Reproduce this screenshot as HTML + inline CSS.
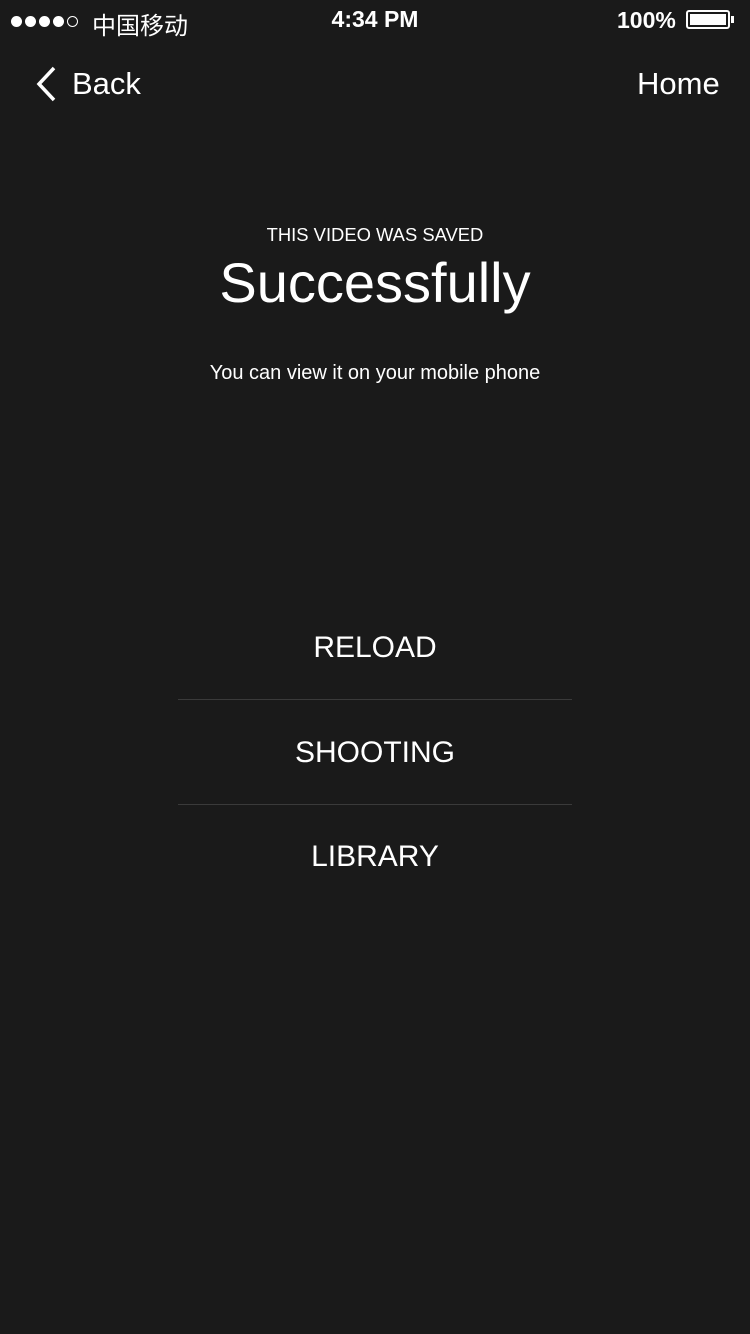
<!DOCTYPE html>
<html><head><meta charset="utf-8"><style>
body{margin:0;width:750px;height:1334px;background:#1a1a1a;color:#fff;font-family:"Liberation Sans","Noto Sans CJK SC",sans-serif;position:relative;overflow:hidden}
.a{position:absolute;white-space:nowrap}
.dot{display:inline-block;width:11px;height:11px;border-radius:50%;background:#fff;margin-right:3px;box-sizing:border-box}
.c{left:0;width:750px;text-align:center}
.line{position:absolute;left:178px;width:394px;height:1px;background:#3a3a3a}
</style></head><body>
<div class="a" style="left:11px;top:14px"><span class="dot"></span><span class="dot"></span><span class="dot"></span><span class="dot"></span><span class="dot" style="background:none;border:1.5px solid #fff"></span></div>
<div class="a" style="left:92px;top:6px;font-size:24px">中国移动</div>
<div class="a c" style="top:6px;font-size:23px;font-weight:bold">4:34 PM</div>
<div class="a" style="left:617px;top:7px;font-size:23px;font-weight:bold">100%</div>
<div class="a" style="left:686px;top:10px;width:44px;height:19px;border:2px solid #fff;border-radius:3px;box-sizing:border-box;padding:2px"><div style="background:#fff;width:100%;height:100%"></div></div>
<div class="a" style="left:731px;top:16px;width:3px;height:7px;background:#fff"></div>
<svg class="a" style="left:34px;top:66px" width="24" height="36"><path d="M20 2 L5 18 L20 34" stroke="#fff" stroke-width="3.5" fill="none"/></svg>
<div class="a" style="left:72px;top:66px;font-size:31px">Back</div>
<div class="a" style="left:637px;top:66px;font-size:31px">Home</div>
<div class="a c" style="top:224px;font-size:18.4px">THIS VIDEO WAS SAVED</div>
<div class="a c" style="top:250px;font-size:56px">Successfully</div>
<div class="a c" style="top:362px;font-size:20px">You can view it on your mobile phone</div>
<div class="a c" style="top:631px;font-size:30px">RELOAD</div>
<div class="line" style="top:699px"></div>
<div class="a c" style="top:736px;font-size:30px">SHOOTING</div>
<div class="line" style="top:804px"></div>
<div class="a c" style="top:840px;font-size:30px">LIBRARY</div>
</body></html>
